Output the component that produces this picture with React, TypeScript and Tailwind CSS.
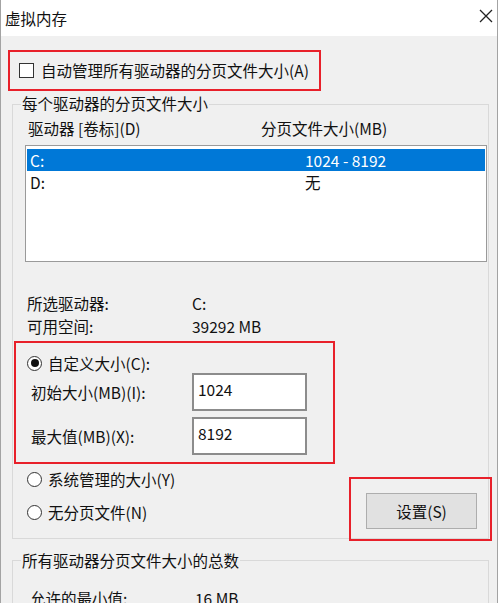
import React from 'react';

const font = "font-['Noto_Sans_CJK_SC','Noto_Sans',sans-serif]";

const Radio: React.FC<{ checked?: boolean; label: string }> = ({ checked, label }) => (
    <div className="flex h-[20px] items-center pl-[2px]">
        <span className="flex h-[15px] w-[15px] items-center justify-center rounded-full border border-[#333] bg-white">
            {checked && <span className="h-[8px] w-[8px] rounded-full bg-[#111]" />}
        </span>
        <span className="ml-[6px]">{label}</span>
    </div>
);

const SizeRow: React.FC<{ label: string; value: string; className?: string }> = ({ label, value, className }) => (
    <div className={`flex h-[38px] items-center ${className ?? ''}`}>
        <span className="w-[167px] pl-[6px]">{label}</span>
        <div className="h-[38px] w-[115px] border-2 border-[#8c8c8c] bg-white pl-[4px] pt-[4px] leading-[20px]">{value}</div>
    </div>
);

const App: React.FC = () => {
    return (
        <div className={`relative h-[603px] w-[500px] overflow-hidden bg-white text-[15.5px] leading-[20px] text-[#111] ${font}`}>
            <div className="flex h-full w-[498px] flex-col border-x border-[#a3a3a3]">
                {/* title bar */}
                <div className="flex h-[36px] shrink-0 items-center justify-between bg-white pl-[4px] pr-[4px]">
                    <span>虚拟内存</span>
                    <svg width="14" height="14" viewBox="0 0 14 14" className="mb-[4px]">
                        <path d="M1 1 L13 13 M13 1 L1 13" stroke="#222" strokeWidth="1.3" fill="none" />
                    </svg>
                </div>

                <div className="min-h-0 flex-1 bg-[#f0f0f0]">
                    {/* auto manage */}
                    <div className="mt-[24px] flex h-[20px] items-center pl-[18px]">
                        <span className="h-[15px] w-[15px] border border-[#333] bg-white" />
                        <span className="ml-[7px]">自动管理所有驱动器的分页文件大小(A)</span>
                    </div>

                    {/* per drive */}
                    <div className="ml-[11px] mt-[24px] w-[477px] border border-[#d9d9d9]">
                        <div className="-mt-[12px] ml-[8px] w-fit bg-[#f0f0f0] px-[1px]">每个驱动器的分页文件大小</div>
                        <div className="pl-[12px] pr-[1px] pb-[9px]">
                            <div className="mt-[5px] flex pl-[3px]">
                                <span className="w-[233px]">驱动器 [卷标](D)</span>
                                <span>分页文件大小(MB)</span>
                            </div>
                            <div className="mt-[7px] h-[117px] border border-[#9a9a9a] bg-white px-[1px] pt-[3px]">
                                <div className="flex h-[22px] items-center bg-[#0078d7] pl-[3px] text-white">
                                    <span className="w-[275px]">C:</span>
                                    <span>1024 - 8192</span>
                                </div>
                                <div className="flex h-[22px] items-center pl-[3px]">
                                    <span className="w-[275px]">D:</span>
                                    <span>无</span>
                                </div>
                            </div>

                            <div className="mt-[31px] flex pl-[2px]">
                                <span className="w-[165px]">所选驱动器:</span>
                                <span>C:</span>
                            </div>
                            <div className="mt-[3px] flex pl-[2px]">
                                <span className="w-[165px]">可用空间:</span>
                                <span>39292 MB</span>
                            </div>

                            <div className="mt-[17px]">
                                <Radio checked label="自定义大小(C):" />
                            </div>
                            <SizeRow label="初始大小(MB)(I):" value="1024" />
                            <SizeRow label="最大值(MB)(X):" value="8192" className="mt-[6px]" />

                            <div className="mt-[14px] flex items-start justify-between pr-[10px]">
                                <div className="flex flex-col gap-[13px]">
                                    <Radio label="系统管理的大小(Y)" />
                                    <Radio label="无分页文件(N)" />
                                </div>
                                <button className="mt-[24px] h-[36px] w-[111px] border border-[#adadad] bg-[#e1e1e1] text-[#111]">
                                    设置(S)
                                </button>
                            </div>
                        </div>
                    </div>

                    {/* totals */}
                    <div className="ml-[11px] mt-[21px] w-[477px] border border-[#d9d9d9] pb-[20px]">
                        <div className="-mt-[11px] ml-[8px] w-fit bg-[#f0f0f0] px-[1px]">所有驱动器分页文件大小的总数</div>
                        <div className="mt-[18px] flex pl-[17px]">
                            <span className="w-[165px]">允许的最小值:</span>
                            <span>16 MB</span>
                        </div>
                    </div>
                </div>
            </div>

            {/* red annotation frames */}
            <div className="pointer-events-none absolute left-[8px] top-[50px] h-[41px] w-[313px] border-2 border-[#e8202a]" />
            <div className="pointer-events-none absolute left-[14px] top-[341px] h-[123px] w-[321px] border-2 border-[#e8202a]" />
            <div className="pointer-events-none absolute left-[349px] top-[477px] h-[64px] w-[143px] border-2 border-[#e8202a]" />
        </div>
    );
};

export default App;
